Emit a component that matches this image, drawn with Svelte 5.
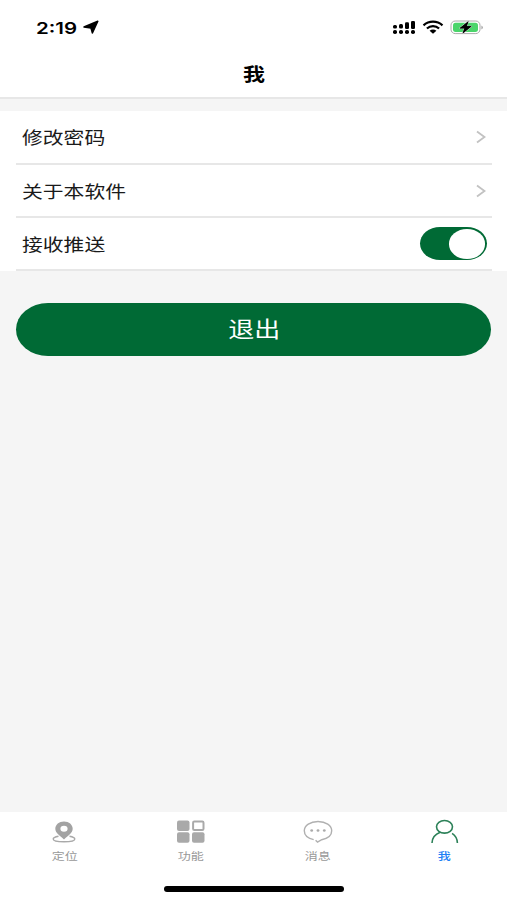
<script lang="ts">
  let pushEnabled = $state(true);
  let activeTab = $state('me');

  const links = ['修改密码', '关于本软件'];

  const tabs = [
    { key: 'location', label: '定位' },
    { key: 'features', label: '功能' },
    { key: 'messages', label: '消息' },
    { key: 'me', label: '我' },
  ];
</script>

<div class="screen">
  <div class="status-bar">
    <div class="clock">
      <span class="time">2:19</span>
      <svg width="18" height="16" viewBox="0 0 18 16">
        <path d="M2 8 15.8 2.2 10.4 14 9 9Z" fill="#000" stroke="#000" stroke-width="1.5" stroke-linejoin="round" />
      </svg>
    </div>
    <div class="indicators">
      <svg width="24" height="16" viewBox="0 0 24 16">
        <g fill="#000">
          <rect x="1" y="6" width="4" height="3.5" rx="1.5" />
          <rect x="7" y="5" width="4" height="4.5" rx="1.5" />
          <rect x="13" y="3.2" width="4" height="6.8" rx="1.3" />
          <rect x="19" y="2" width="4" height="8" rx="1.3" />
          <rect x="1" y="11" width="4" height="4" rx="1.8" />
          <rect x="7" y="11" width="4" height="4" rx="1.8" />
          <rect x="13" y="11" width="4" height="4" rx="1.8" />
          <rect x="19" y="11" width="4" height="4" rx="1.8" />
        </g>
      </svg>
      <svg class="wifi" width="22" height="16" viewBox="0 0 22 16">
        <g fill="none" stroke="#000" stroke-width="2.2">
          <path d="M1.5 6.3C7 1.5 15 1.5 20.5 6.3" />
          <path d="M4.9 9.5C8.4 6.3 13.6 6.3 17.1 9.5" />
        </g>
        <path d="M7.6 11.7C9.5 10 12.5 10 14.4 11.7L11 14.7Z" fill="#000" />
      </svg>
      <svg width="34" height="16" viewBox="0 0 34 16">
        <rect x="1" y="2" width="29" height="12.6" rx="4.2" fill="#fff" stroke="#aaa" stroke-width="1" />
        <rect x="3" y="3.7" width="25" height="9.2" rx="2.6" fill="#4bd56b" />
        <path d="M31.4 6.4Q33 7.2 33 8.4T31.4 10.4Z" fill="#aaa" />
        <path d="M18.3 2.5 9.8 9.2H14.6L12.8 14.3 21.4 7.3H16.5Z" fill="#000" stroke="#fff" stroke-width="1.2" paint-order="stroke" stroke-linejoin="round" />
        <path d="M18.3 2.5 9.8 9.2H14.6L12.8 14.3 21.4 7.3H16.5Z" fill="#000" stroke="#000" stroke-width="0.5" />
      </svg>
    </div>
  </div>

  <header><h1 class="wide">我</h1></header>

  <main>
    <div class="list">
      {#each links as link}
        <div class="row">
          <span class="label wide">{link}</span>
          <svg class="chevron" width="10" height="14" viewBox="0 0 10 14">
            <path d="M1 1.5 8.5 7 1 12.5" fill="none" stroke="#c2c2c2" stroke-width="1.8" />
          </svg>
        </div>
      {/each}
      <div class="row">
        <span class="label wide">接收推送</span>
        <button
          class="switch"
          class:on={pushEnabled}
          role="switch"
          aria-checked={pushEnabled}
          aria-label="接收推送"
          onclick={() => (pushEnabled = !pushEnabled)}
        >
          <span class="knob"></span>
        </button>
      </div>
    </div>

    <button class="logout"><span class="wide">退出</span></button>
  </main>

  <nav>
    {#each tabs as tab}
      <button class="tab" class:active={activeTab === tab.key} onclick={() => (activeTab = tab.key)}>
        <svg width="32" height="26" viewBox="0 0 32 26">
          {#if tab.key === 'location'}
            <path d="M10.5 17.2C7 17.8 5.2 18.8 5.2 20 5.2 21.7 10 22.8 16 22.8S26.8 21.7 26.8 20C26.8 18.8 25 17.8 21.5 17.2" fill="none" stroke="#a9a9a9" stroke-width="1.4" />
            <path fill-rule="evenodd" d="M16 2.4C11 2.4 7.3 5.6 7.3 9.7 7.3 14 12 16.5 16 20.5 20 16.5 24.7 14 24.7 9.7 24.7 5.6 21 2.4 16 2.4ZM16 6.7A3.6 3 0 1 1 16 12.7 3.6 3 0 1 1 16 6.7Z" fill="#a3a3a3" />
          {:else if tab.key === 'features'}
            <g fill="#a9a9a9">
              <rect x="2" y="1.5" width="12.5" height="10.4" rx="2" />
              <rect x="2" y="13.3" width="12.5" height="10.4" rx="2" />
              <rect x="17" y="13.3" width="12.5" height="10.4" rx="2" />
            </g>
            <rect x="18.1" y="2.5" width="10.4" height="8.4" rx="1.2" fill="#fff" stroke="#a9a9a9" stroke-width="2" />
          {:else if tab.key === 'messages'}
            <path d="M11.7 20.6C6 19.4 2.3 16 2.3 11.8 2.3 6.4 8.3 2.5 16 2.5S29.7 6.4 29.7 11.8C29.7 16.2 25.7 19.6 19.7 20.7L15.5 23.1 13.6 21.3" fill="none" stroke="#b0b0b0" stroke-width="1.4" />
            <g fill="#aaa">
              <ellipse cx="9.7" cy="11.5" rx="1.4" ry="1.2" />
              <ellipse cx="16" cy="11.5" rx="1.4" ry="1.2" />
              <ellipse cx="22.3" cy="11.5" rx="1.4" ry="1.2" />
            </g>
          {:else}
            <g fill="none" stroke="#2c8158" stroke-width="1.6">
              <ellipse cx="15.5" cy="7.8" rx="8" ry="6.3" />
              <path d="M11.2 13.2C6.3 15 3.2 18.8 3 24" />
              <path d="M23.1 14.4C26.5 16.6 28.3 19.8 28.4 24" />
            </g>
          {/if}
        </svg>
        <span class="tab-label wide">{tab.label}</span>
      </button>
    {/each}
  </nav>

  <div class="home-indicator"><div class="bar"></div></div>
</div>

<style>
  :global(body) {
    margin: 0;
  }

  .screen {
    display: flex;
    flex-direction: column;
    width: 507px;
    height: 900px;
    overflow: hidden;
    background: #f5f5f5;
    color: #1a1a1a;
    font-family: "Noto Sans CJK SC", sans-serif;
  }

  button {
    padding: 0;
    border: 0;
    background: none;
    font-family: inherit;
    cursor: pointer;
  }

  /* type is set wider than it is tall */
  .wide {
    display: inline-block;
    transform: scaleX(1.219);
  }

  .status-bar {
    display: flex;
    justify-content: space-between;
    box-sizing: border-box;
    height: 50px;
    padding: 19px 23px 0 36px;
    background: #fff;
  }

  .clock,
  .indicators {
    display: flex;
    height: 16px;
    align-items: center;
  }

  .time {
    width: 46px;
    padding-top: 1px;
    color: #000;
    font-family: Inter, sans-serif;
    font-size: 16px;
    font-weight: 600;
    line-height: 16px;
    transform: scaleX(1.28);
    transform-origin: left;
  }

  .wifi {
    margin: 0 6px 0 6px;
  }

  header {
    display: flex;
    justify-content: center;
    align-items: center;
    box-sizing: border-box;
    height: 49px;
    padding-bottom: 2px;
    border-bottom: 2px solid #e7e7e7;
    background: #fff;
  }

  h1 {
    margin: 0;
    color: #000;
    font-size: 18px;
    font-weight: 700;
    line-height: 24px;
  }

  main {
    flex: 1;
    padding-top: 12px;
  }

  .list {
    padding: 0 15px 0 16px;
    background: #fff;
  }

  .row {
    display: flex;
    justify-content: space-between;
    align-items: center;
    box-sizing: border-box;
    height: 53.3px;
    padding: 1px 5px 0 6px;
    border-bottom: 2px solid #e7e7e7;
  }

  .row:first-child {
    height: 53.6px;
  }

  .row:last-child {
    height: 53px;
  }

  .label {
    font-size: 17.07px;
    line-height: 24px;
    transform-origin: left;
  }

  .chevron {
    margin-right: 1px;
  }

  .switch {
    display: flex;
    align-items: center;
    box-sizing: border-box;
    width: 67px;
    height: 33px;
    padding: 0 2px;
    border-radius: 20px / 16.5px;
    background: #ccc;
  }

  .switch.on {
    justify-content: flex-end;
    background: #006a35;
  }

  .knob {
    width: 36px;
    height: 29.5px;
    border-radius: 50%;
    background: #fff;
  }

  .logout {
    display: block;
    width: 475px;
    height: 53px;
    margin: 32px 0 0 16px;
    border-radius: 32px / 26.5px;
    background: #006a35;
    color: #fff;
    font-size: 21.3px;
    line-height: 50px;
  }

  .logout .wide {
    margin-left: 1px;
    padding-bottom: 3px;
  }

  nav {
    display: grid;
    grid-template-columns: repeat(4, 1fr);
    height: 63.5px;
    padding-left: 1px;
    margin-right: -1px;
    background: #fff;
  }

  .tab {
    display: flex;
    flex-direction: column;
    align-items: center;
    padding-top: 7.5px;
    color: #999;
  }

  .tab-label {
    margin-top: 3px;
    font-size: 10.7px;
    line-height: 16px;
  }

  .tab.active .tab-label {
    margin-right: 1px;
    color: #1f80f5;
    font-weight: 500;
  }

  .home-indicator {
    display: flex;
    justify-content: center;
    height: 25px;
    background: #fff;
  }

  .bar {
    width: 180px;
    height: 5.5px;
    margin: 11px 0 0 1px;
    border-radius: 3px;
    background: #000;
  }
</style>
